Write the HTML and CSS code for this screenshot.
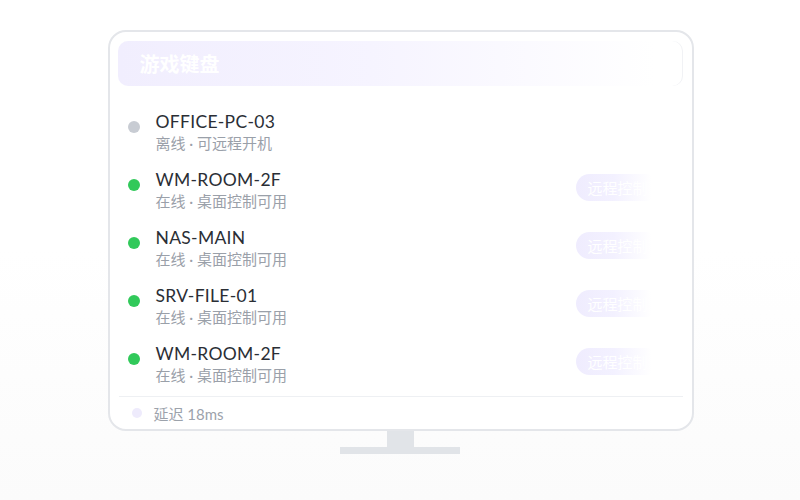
FILE: index.html
```html
<!DOCTYPE html>
<html lang="zh">
<head>
<meta charset="utf-8">
<link rel="stylesheet" href="styles.css">
</head>
<body>
<div class="stage">
  <div class="monitor">
    <div class="header"><span class="title">游戏键盘</span></div>
    <div class="list">
      <div class="row">
        <span class="dot off"></span>
        <div class="info"><div class="name">OFFICE-PC-03</div><div class="sub">离线 · 可远程开机</div></div>
      </div>
      <div class="row">
        <span class="dot on"></span>
        <div class="info"><div class="name">WM-ROOM-2F</div><div class="sub">在线 · 桌面控制可用</div></div>
        <span class="btn">远程控制</span>
      </div>
      <div class="row">
        <span class="dot on"></span>
        <div class="info"><div class="name">NAS-MAIN</div><div class="sub">在线 · 桌面控制可用</div></div>
        <span class="btn">远程控制</span>
      </div>
      <div class="row">
        <span class="dot on"></span>
        <div class="info"><div class="name">SRV-FILE-01</div><div class="sub">在线 · 桌面控制可用</div></div>
        <span class="btn">远程控制</span>
      </div>
      <div class="row">
        <span class="dot on"></span>
        <div class="info"><div class="name">WM-ROOM-2F</div><div class="sub">在线 · 桌面控制可用</div></div>
        <span class="btn">远程控制</span>
      </div>
    </div>
    <div class="footer">
      <span class="fdot"></span><span class="latency">延迟 18ms</span>
    </div>
  </div>
  <div class="neck"></div>
  <div class="base"></div>
</div>
</body>
</html>
```

FILE: styles.css
```css
html, body {
  margin: 0;
  height: 100%;
}
body {
  width: 800px;
  height: 500px;
  overflow: hidden;
  background: linear-gradient(180deg, #ffffff 0%, #ffffff 50%, #fbfbfb 100%);
  font-family: "Lato", "Noto Sans CJK SC", sans-serif;
}
.stage {
  display: flex;
  flex-direction: column;
  align-items: center;
  padding-top: 30px;
}
.monitor {
  box-sizing: border-box;
  width: 586px;
  height: 401px;
  margin-left: 1px;
  border: 2px solid #e4e6ea;
  border-radius: 18px;
  background: #ffffff;
  padding: 9px 9px 0 8px;
  display: flex;
  flex-direction: column;
}
.header {
  height: 45px;
  border-radius: 10px;
  background: linear-gradient(90deg, #f1eefe 0%, #f6f4ff 45%, #ffffff 95%);
  display: flex;
  align-items: center;
  padding-left: 22px;
  box-shadow: inset -1px 0 0 #f1f2f5;
}
.title {
  color: #ffffff;
  font-family: "Noto Sans CJK SC", sans-serif;
  font-size: 20px;
  font-weight: 700;
  line-height: 1;
}
.list {
  padding: 18px 0 0 10px;
  display: flex;
  flex-direction: column;
}
.row {
  height: 58px;
  display: flex;
  align-items: flex-start;
  padding-right: 23px;
}
.dot {
  width: 12px;
  height: 12px;
  border-radius: 50%;
  margin-top: 17px;
  margin-right: 16px;
  flex: none;
}
.dot.off { background: #c8ccd3; }
.dot.on { background: #31c95a; }
.info {
  flex: 1;
  display: flex;
  flex-direction: column;
}
.name {
  font-size: 17.5px;
  line-height: 22px;
  color: #2a2e35;
  letter-spacing: 0.3px;
  margin-top: 7px;
}
.sub {
  font-size: 15px;
  line-height: 20px;
  color: #9aa0a9;
}
.btn {
  margin-top: 12px;
  width: 84px;
  height: 27px;
  border-radius: 14px;
  background: linear-gradient(90deg, #efecfe 0%, #f3f1ff 45%, #ffffff 90%);
  color: #ffffff;
  font-family: "Noto Sans CJK SC", sans-serif;
  font-size: 15px;
  line-height: 27px;
  padding-left: 12px;
  box-sizing: border-box;
  white-space: nowrap;
  overflow: hidden;
}
.footer {
  margin-top: 2px;
  border-top: 1px solid #eef0f3;
  height: 32px;
  display: flex;
  align-items: center;
  padding-left: 13px;
  margin-left: 1px;
}
.fdot {
  width: 10px;
  height: 10px;
  border-radius: 50%;
  background: #eeebfc;
  margin-right: 12px;
}
.latency {
  font-size: 15px;
  color: #9ca2ab;
}
.neck {
  width: 27px;
  height: 16px;
  background: #e1e4e8;
  margin-left: 1px;
}
.base {
  width: 120px;
  height: 7px;
  background: #e1e4e8;
}
```
